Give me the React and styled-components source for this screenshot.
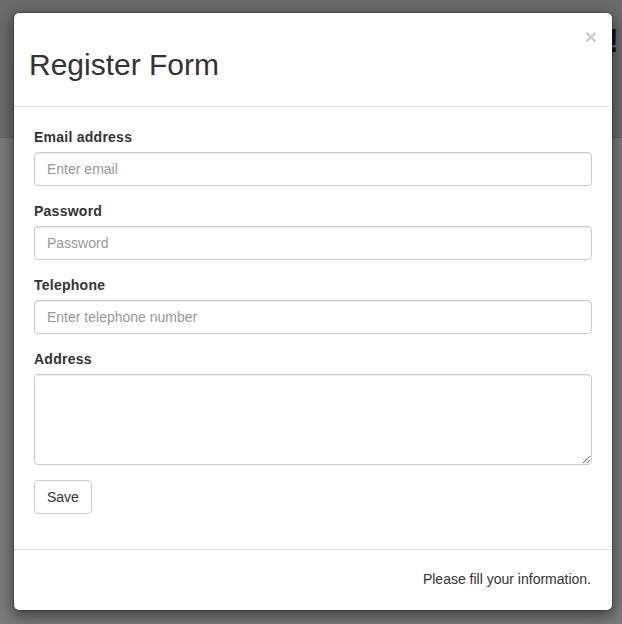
import styled, { createGlobalStyle } from 'styled-components';

const GlobalStyle = createGlobalStyle`
    * {
        box-sizing: border-box;
    }
    html, body {
        margin: 0;
        padding: 0;
        height: 100%;
    }
    body {
        font-family: "Liberation Sans", Arial, Helvetica, sans-serif;
        font-size: 14px;
        line-height: 1.42857;
        color: #333;
        background: #787878;
        overflow: hidden;
    }
`;

const Page = styled.div`
    position: relative;
    width: 622px;
    height: 624px;
    background: #7b7b7b;
`;

const TopBand = styled.header`
    height: 138px;
    background: #6b6b6b;
    border-bottom: 1px solid #626262;
    display: flex;
    justify-content: flex-end;
    align-items: flex-start;
    overflow: hidden;
    .heading {
        margin: 22px 3px 0 0;
        font-size: 34px;
        line-height: 36px;
        font-weight: 700;
        color: #101820;
    }
`;

const Dialog = styled.div`
    position: absolute;
    top: 12px;
    left: 13px;
    width: 600px;
    background: #fff;
    border: 1px solid rgba(0, 0, 0, 0.2);
    border-radius: 6px;
    box-shadow: 0 5px 15px rgba(0, 0, 0, 0.5);
    background-clip: padding-box;
`;

const Header = styled.div`
    position: relative;
    padding: 15px;
    border-bottom: 1px solid #e5e5e5;
    h1 {
        margin: 20px 0 10px;
        font-size: 30px;
        line-height: 33px;
        font-weight: 500;
        color: #333;
    }
`;

const Close = styled.button`
    position: absolute;
    top: 13px;
    right: 15px;
    padding: 0;
    border: 0;
    background: transparent;
    font-family: "Liberation Sans", Arial, sans-serif;
    font-size: 21px;
    font-weight: 700;
    line-height: 1;
    color: #000;
    opacity: 0.2;
    cursor: pointer;
`;

const Body = styled.form`
    padding: 20px;
`;

const Group = styled.div`
    margin-bottom: 15px;
`;

const Label = styled.label`
    display: block;
    margin-bottom: 5px;
    font-weight: 700;
    font-size: 14px;
    line-height: 20px;
    letter-spacing: 0.25px;
    color: #333;
`;

const inputBase = `
    display: block;
    width: 100%;
    padding: 6px 12px;
    font-family: "Liberation Sans", Arial, sans-serif;
    font-size: 14px;
    line-height: 20px;
    color: #555;
    background: #fff;
    border: 1px solid #ccc;
    border-radius: 4px;
    box-shadow: inset 0 1px 1px rgba(0, 0, 0, 0.075);
    outline: none;
    &::placeholder {
        color: #999;
    }
`;

const Input = styled.input`
    ${inputBase}
    height: 34px;
`;

const TextArea = styled.textarea`
    ${inputBase}
    height: 91px;
    resize: vertical;
`;

const Button = styled.button`
    display: inline-block;
    height: 34px;
    padding: 6px 12px;
    font-family: "Liberation Sans", Arial, sans-serif;
    font-size: 14px;
    line-height: 20px;
    color: #333;
    background: #fff;
    border: 1px solid #ccc;
    border-radius: 4px;
    cursor: pointer;
`;

const Footer = styled.div`
    padding: 19px 21px 21px 20px;
    border-top: 1px solid #e5e5e5;
    text-align: right;
    line-height: 20px;
    color: #333;
`;

const fields = [
    { id: 'email', label: 'Email address', type: 'email', placeholder: 'Enter email' },
    { id: 'password', label: 'Password', type: 'password', placeholder: 'Password' },
    { id: 'phone', label: 'Telephone', type: 'tel', placeholder: 'Enter telephone number' },
];

export default function App() {
    return (
        <>
            <GlobalStyle />
            <Page>
                <TopBand>
                    <span className="heading">!</span>
                </TopBand>
                <Dialog>
                    <Header>
                        <Close type="button">&times;</Close>
                        <h1>Register Form</h1>
                    </Header>
                    <Body onSubmit={(e) => e.preventDefault()}>
                        {fields.map(({ id, label, type, placeholder }) => (
                            <Group key={id}>
                                <Label htmlFor={id}>{label}</Label>
                                <Input id={id} type={type} placeholder={placeholder} />
                            </Group>
                        ))}
                        <Group>
                            <Label htmlFor="address">Address</Label>
                            <TextArea id="address" />
                        </Group>
                        <Group>
                            <Button type="submit">Save</Button>
                        </Group>
                    </Body>
                    <Footer>Please fill your information.</Footer>
                </Dialog>
            </Page>
        </>
    );
}
